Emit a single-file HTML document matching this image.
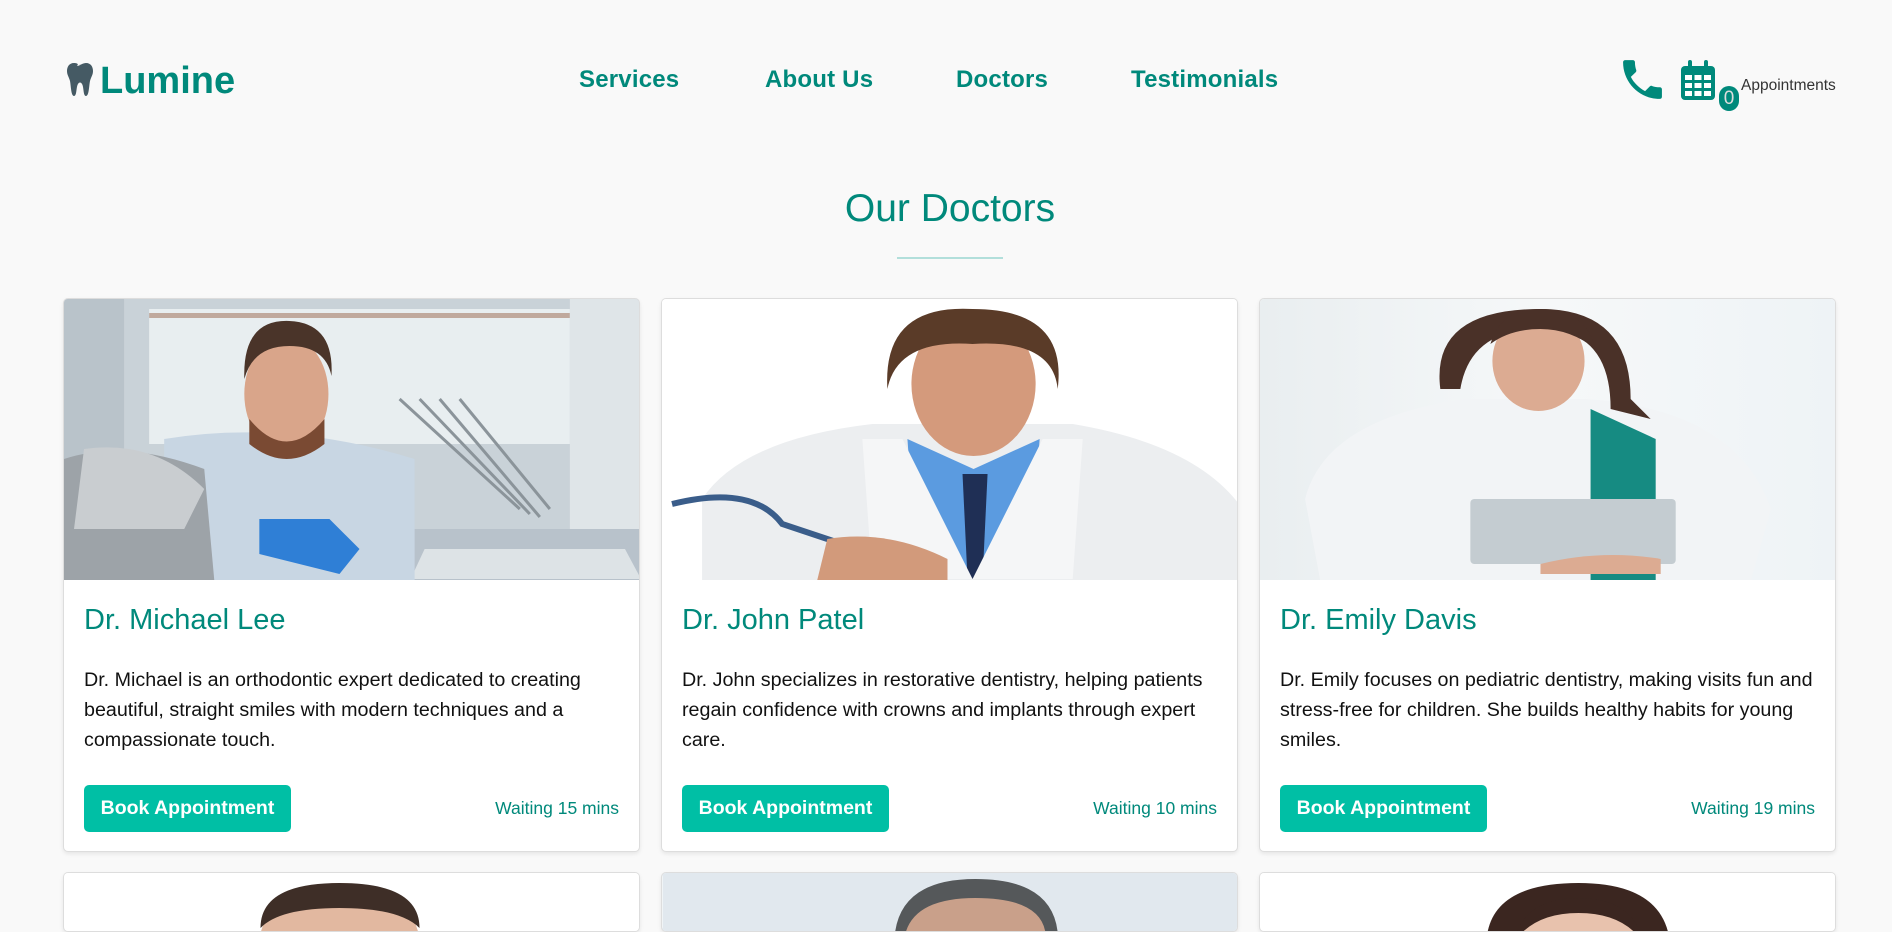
<!DOCTYPE html>
<html><head><meta charset="utf-8"><style>
*{margin:0;padding:0;box-sizing:border-box}
html,body{width:1892px;height:932px;overflow:hidden}
body{background:#f9f9f9;font-family:"Liberation Sans",Arial,sans-serif;position:relative}
.abs{position:absolute}
.logo{left:100px;top:59px;font-size:38px;font-weight:bold;color:#00897b;line-height:44px}
.nav a{position:absolute;top:66px;font-size:24px;font-weight:bold;color:#00897b;text-decoration:none;line-height:28px;letter-spacing:0.2px}
h2{position:absolute;left:0;width:1900px;text-align:center;top:186px;font-size:39px;font-weight:normal;color:#00897b;line-height:46px}
.line{left:897px;top:257px;width:106px;height:2px;background:#b2dfdb}
.card{position:absolute;width:577px;height:554px;background:#fff;border:1px solid #ddd;border-radius:5px;box-shadow:0 2px 4px rgba(0,0,0,.08);overflow:hidden}
.card svg{display:block}
.card h3{position:absolute;left:20px;font-size:29px;font-weight:normal;color:#00897b;line-height:34px}
.card p{position:absolute;left:20px;top:366px;width:540px;font-size:19.7px;line-height:30px;color:#111}
.btn{position:absolute;left:20px;top:486px;width:207px;height:47px;background:#00bfa5;border-radius:5px;color:#fff;font-weight:bold;font-size:19.5px;line-height:47px;text-align:center}
.wait{position:absolute;right:20px;top:498px;font-size:17.5px;color:#00897b;line-height:22px}
</style></head><body>
<svg class="abs" style="left:67px;top:63px" width="29" height="33" viewBox="0 0 29 33"><path d="M7 0C2 0 0 4 0 8c0 4 2 6 3 10 1 5 1 15 4 15s2-9 4-12c1-2 3-2 4 0 2 3 1 12 4 12s3-10 4-15c1-4 3-6 3-10 0-4-2-8-7-8-3 0-5 2-7 2 2 0 4-1 5-1-2-1-4 2-7 2C12 1 10 0 7 0z" fill="#455a64"/></svg>
<div class="abs logo">Lumine</div>
<div class="nav"><a style="left:579px">Services</a><a style="left:765px">About Us</a><a style="left:956px">Doctors</a><a style="left:1131px">Testimonials</a></div>
<svg class="abs" style="left:1622px;top:59px" width="41" height="41" viewBox="2.5 2.5 19 19"><path d="M6.6 10.8c1.4 2.8 3.8 5.1 6.6 6.6l2.2-2.2c.3-.3.7-.4 1-.2 1.1.4 2.300.6 3.6.6.6 0 1 .4 1 1V20c0 .6-.4 1-1 1C10.6 21 3 13.4 3 4c0-.6.4-1 1-1h3.5c.6 0 1 .4 1 1 0 1.3.2 2.5.6 3.6.1.3 0 .7-.2 1L6.6 10.8z" fill="#00897b"/></svg>
<svg class="abs" style="left:1681px;top:60px" width="34" height="40" viewBox="0 0 34 40"><rect x="0" y="6" width="34" height="34" rx="4" fill="#00897b"/><rect x="7" y="0" width="4" height="10" rx="2" fill="#00897b"/><rect x="23" y="0" width="4" height="10" rx="2" fill="#00897b"/><g fill="#fff"><rect x="4" y="15" width="7" height="5"/><rect x="13.5" y="15" width="7" height="5"/><rect x="23" y="15" width="7" height="5"/><rect x="4" y="23" width="7" height="5"/><rect x="13.5" y="23" width="7" height="5"/><rect x="23" y="23" width="7" height="5"/><rect x="4" y="31" width="7" height="5"/><rect x="13.5" y="31" width="7" height="5"/><rect x="23" y="31" width="7" height="5"/></g></svg>
<div class="abs" style="left:1719px;top:86px;width:20px;height:25px;border-radius:10px;background:#00897b;color:#ddd;font-size:19px;text-align:center;line-height:25px">0</div>
<div class="abs" style="left:1741px;top:77px;font-size:15.5px;color:#333">Appointments</div>
<h2>Our Doctors</h2>
<div class="abs line"></div>

<div class="card" style="left:63px;top:298px">
<svg width="577" height="281" viewBox="0 0 576 281" preserveAspectRatio="none">
<rect width="576" height="281" fill="#c9d2d8"/>
<rect x="85" y="10" width="420" height="135" fill="#e8eef0"/><rect x="85" y="14" width="420" height="5" fill="#c0a99d"/>
<rect x="0" y="0" width="60" height="281" fill="#b9c3ca"/><rect x="505" y="0" width="71" height="281" fill="#dfe5e8"/>
<rect x="330" y="230" width="246" height="51" fill="#b8c2cb"/>
<path d="M360 250 h200 l16 30 h-230z" fill="#dde3e6"/>
<path d="M335 100 l120 110 M355 100 l110 115 M375 100 l100 118 M395 100 l90 110" stroke="#8b949a" stroke-width="3" fill="none"/>
<path d="M100 140 q120 -20 250 20 v121 h-250z" fill="#c8d6e3"/>
<ellipse cx="222" cy="95" rx="42" ry="58" fill="#d9a58a"/>
<path d="M180 80 q-2 -60 45 -58 q45 2 42 55 q-6 -30 -42 -30 q-36 0 -45 33z" fill="#4a3429"/>
<path d="M185 120 q37 45 75 0 v25 q-38 30 -75 0z" fill="#7a4a33"/>
<path d="M195 220 h70 l30 30 l-20 25 l-80 -20z" fill="#2f7fd6"/>
<path d="M0 160 q60 -20 140 10 l10 111 h-150z" fill="#9da3a8"/>
<path d="M20 150 q70 -10 120 40 l-20 40 h-110z" fill="#c9cdd0"/>
</svg>
<h3 style="top:304px">Dr. Michael Lee</h3>
<p>Dr. Michael is an orthodontic expert dedicated to creating beautiful, straight smiles with modern techniques and a compassionate touch.</p>
<div class="btn">Book Appointment</div><div class="wait">Waiting 15 mins</div>
</div>

<div class="card" style="left:661px;top:298px">
<svg width="577" height="281" viewBox="0 0 576 281" preserveAspectRatio="none">
<rect width="576" height="281" fill="#fff"/>
<path d="M40 200 q40 -60 170 -75 h200 q120 20 166 80 v76 h-536z" fill="#eceef0"/>
<path d="M245 140 l66 30 l66 -30 l-10 140 h-112z" fill="#5b9be0"/>
<path d="M300 175 h25 l-5 105 h-15z" fill="#1f2f55"/>
<path d="M200 140 l40 0 l70 140 h-100z M420 140 l-40 0 l-70 140 h100z" fill="#f5f6f7"/>
<ellipse cx="311" cy="85" rx="62" ry="72" fill="#d49a7c"/>
<path d="M225 90 q-5 -85 85 -80 q95 0 85 80 q-5 -50 -85 -45 q-75 -5 -85 45z" fill="#5a3b28"/>
<path d="M10 205 q80 -20 110 20 l60 20" stroke="#3a5d8a" stroke-width="6" fill="none"/>
<path d="M165 240 q60 -10 120 20 v21 h-130z" fill="#d29a7b"/>
</svg>
<h3 style="top:304px">Dr. John Patel</h3>
<p>Dr. John specializes in restorative dentistry, helping patients regain confidence with crowns and implants through expert care.</p>
<div class="btn">Book Appointment</div><div class="wait">Waiting 10 mins</div>
</div>

<div class="card" style="left:1259px;top:298px">
<svg width="577" height="281" viewBox="0 0 576 281" preserveAspectRatio="none">
<defs><linearGradient id="g3" x1="0" x2="1"><stop offset="0" stop-color="#e9eef0"/><stop offset=".5" stop-color="#f6f8f9"/><stop offset="1" stop-color="#eef3f6"/></linearGradient></defs>
<rect width="576" height="281" fill="url(#g3)"/>
<path d="M45 200 q20 -80 160 -100 h120 q150 10 185 110 l-20 71 h-430z" fill="#f2f4f6"/>
<path d="M330 110 l65 30 v141 h-65z" fill="#168b82"/>
<path d="M180 90 q-10 -80 100 -80 q90 0 90 90 l20 20 l-40 -10 q0 -80 -70 -80 q-70 0 -80 60z" fill="#4a3128"/>
<ellipse cx="278" cy="62" rx="46" ry="50" fill="#dcab92"/>
<path d="M230 45 q10 -35 50 -35 q45 0 55 40 q-25 -20 -55 -20 q-30 0 -50 15z" fill="#4a3128"/>
<rect x="210" y="200" width="205" height="65" rx="4" fill="#c4ccd1"/>
<path d="M280 265 q60 -15 120 -5 v15 h-120z" fill="#dcab92"/>
</svg>
<h3 style="top:304px">Dr. Emily Davis</h3>
<p>Dr. Emily focuses on pediatric dentistry, making visits fun and stress-free for children. She builds healthy habits for young smiles.</p>
<div class="btn">Book Appointment</div><div class="wait">Waiting 19 mins</div>
</div>

<div class="card" style="left:63px;top:872px;height:60px">
<svg width="577" height="80" viewBox="0 0 576 80"><rect width="576" height="80" fill="#fff"/><ellipse cx="275" cy="70" rx="80" ry="60" fill="#e2b8a0"/><path d="M196 55 q0 -45 79 -45 q80 0 80 45 q-20 -20 -80 -20 q-60 0 -79 20z" fill="#3e2e27"/></svg></div>
<div class="card" style="left:661px;top:872px;height:60px">
<svg width="577" height="80" viewBox="0 0 576 80"><rect width="576" height="80" fill="#e1e8ee"/><ellipse cx="313" cy="75" rx="82" ry="60" fill="#c9a08a"/><path d="M232 80 q-5 -74 81 -74 q90 0 82 74 l-12 -20 q-5 -35 -70 -35 q-60 0 -70 35z" fill="#55585a"/></svg></div>
<div class="card" style="left:1259px;top:872px;height:60px">
<svg width="577" height="80" viewBox="0 0 576 80"><rect width="576" height="80" fill="#fff"/><path d="M226 80 q-5 -70 92 -70 q92 0 92 70z" fill="#3b2620"/><ellipse cx="318" cy="80" rx="65" ry="45" fill="#e8c2ad"/><path d="M253 70 q10 -45 65 -45 q55 0 65 45 q-20 -30 -65 -30 q-45 0 -65 30z" fill="#3b2620"/></svg></div>
</body></html>
